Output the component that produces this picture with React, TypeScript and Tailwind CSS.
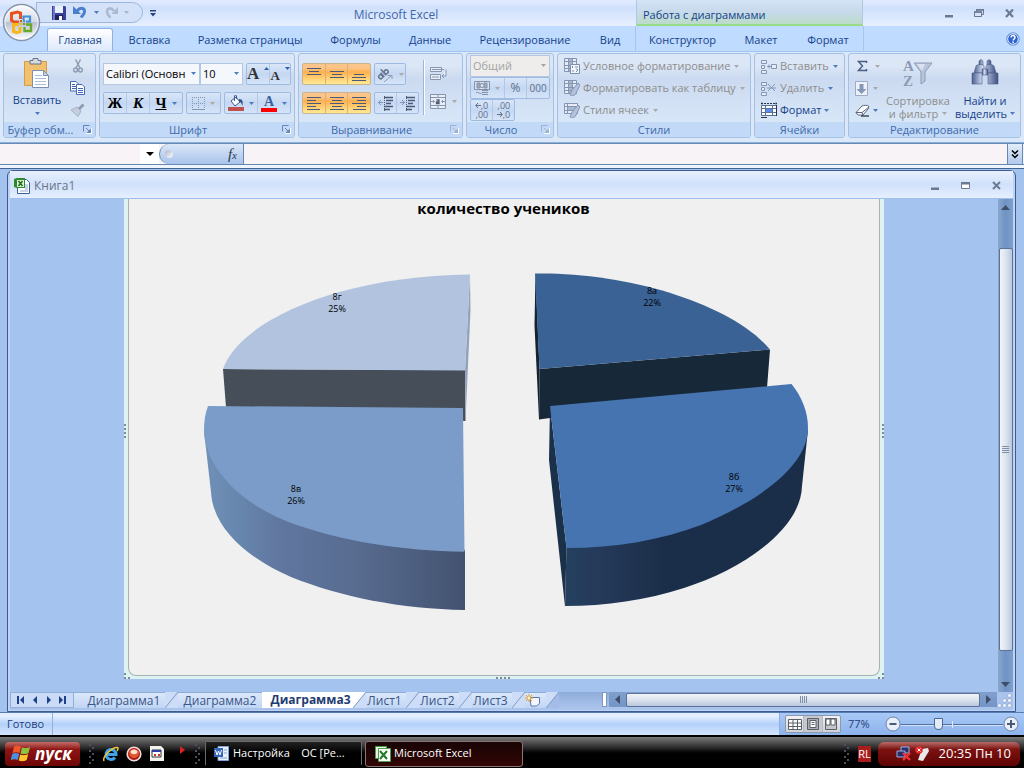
import type { ReactNode } from "react";
import clsx from "clsx";

interface BoxProps {
  className?: string;
  children?: ReactNode;
}

const Caret = ({ className = "text-[#4c7cc0]" }: { className?: string }) => (
  <svg width="5" height="3" viewBox="0 0 5 3" className={clsx("shrink-0", className)}>
    <path d="M0 0h5L2.500 3z" fill="currentColor" />
  </svg>
);

const Launcher = ({ dim }: { dim?: boolean }) => (
  <button aria-label="Параметры" className={dim ? "text-[#9fb0cc]" : "text-[#6886b5]"}>
    <svg width="9" height="9" viewBox="0 0 9 9" fill="none" stroke="currentColor">
      <path d="M.5 6.500V.5h6" />
      <path d="M3 3l4 4" />
      <path d="M8 3.500V8H3.500z" fill="currentColor" stroke="none" />
      <path d="M8.500 3v5.500H3" stroke="#fff" />
    </svg>
  </button>
);

/* ---------- title bar ---------- */

const OfficeButton = () => (
  <button aria-label="Office" className="absolute left-[2px] top-[3px] z-10">
    <svg width="39" height="39" viewBox="0 0 39 39">
      <defs>
        <linearGradient id="orb" x1="0" y1="0" x2="0" y2="1">
          <stop offset="0" stopColor="#fdfdfe" />
          <stop offset=".48" stopColor="#d5dbe6" />
          <stop offset=".5" stopColor="#b9c2d1" />
          <stop offset="1" stopColor="#fff" />
        </linearGradient>
      </defs>
      <circle cx="19.500" cy="19.500" r="18" fill="url(#orb)" stroke="#8795ac" strokeWidth="1.500" />
      <circle cx="19.500" cy="19.500" r="16.500" fill="none" stroke="#fff" opacity=".8" />
      <g fill="none" strokeWidth="3">
        <path d="M18.500 16V10l-3-1-6 1.500v7l3 1.500H17" stroke="#e8511c" />
        <path d="M21.500 17v-3.500H28v5h-4" stroke="#3f8fd6" strokeWidth="2.200" />
        <path d="M17 21.500h-5.500v7l3 1.200 3.500-1V24" stroke="#f6b61c" />
        <path d="M24 21.500h5v6.500h-6.500v-4" stroke="#6aa82c" strokeWidth="2.400" />
      </g>
      <g fill="#c9521f">
        <path d="M18 17h2v2h-2z" />
        <path d="M21 17h2v2h-2z" fill="#3f8fd6" />
        <path d="M18 20h2v2h-2z" fill="#f6b61c" />
        <path d="M21 20h2v2h-2z" fill="#6aa82c" />
      </g>
    </svg>
  </button>
);

const TitleBar = () => (
  <header className="relative flex h-[26px] bg-linear-to-b from-[#dfe9ff] from-10% via-[#cfe0fb] via-30% to-[#e6efff]">
    <OfficeButton />
    <div className="ml-9 flex items-center">
      <div className="mt-[2px] flex h-[21px] w-[107px] items-center gap-[6px] self-start rounded-r-full border border-[#9cb6dc] bg-[#d3e2f8] pl-[15px]">
        <button aria-label="Сохранить">
          <svg width="14" height="14" viewBox="0 0 14 14">
            <path d="M0 0h13l1 1v13H0z" fill="#3b3f9c" />
            <path d="M3 0h8v7H3z" fill="#e8f0fb" />
            <path d="M1 0h2v14H1z" fill="#7377c8" />
            <path d="M3 9h8v5H3z" fill="#20235e" />
            <path d="M7 10h3v4H7z" fill="#fff" />
          </svg>
        </button>
        <button aria-label="Отменить" className="ml-[1px] flex items-center gap-[7px]">
          <svg width="14" height="13" viewBox="0 0 14 13">
            <path d="M4 5C7 1 11.500 1.500 11.500 5.500c0 3-2 3.500-3.500 6" fill="none" stroke="#4a7fd0" strokeWidth="3" />
            <path d="M0 0v8h8z" fill="#4a7fd0" />
          </svg>
          <Caret />
        </button>
        <button aria-label="Вернуть" className="flex items-center gap-[6px]">
          <svg width="13" height="13" viewBox="0 0 13 13">
            <path d="M9 5C6 1 2 2 2 5.500c0 3 1.500 4 3.500 6" fill="none" stroke="#a9b9d2" strokeWidth="2.600" />
            <path d="M13 1v7H6.500z" fill="#a9b9d2" />
          </svg>
          <Caret className="text-[#a9b4c6]" />
        </button>
      </div>
      <button aria-label="Настройка панели" className="ml-[7px]">
        <svg width="6" height="7" viewBox="0 0 6 7" fill="#27467e">
          <path d="M0 0h6v1.500H0zM0 3h6L3 6.500z" />
        </svg>
      </button>
    </div>
    <h1 className="flex-1 pt-[6px] text-center text-[12px] leading-[18px] text-[#4067ab]">Microsoft Excel</h1>
    <div className="w-[227px] border-x border-[#b2c8de] border-b-2 border-b-[#97da87] bg-linear-to-b from-[#d5e3f7] via-[#c6d9ea] to-[#bcdcc8] pl-[6px] pt-[7px] text-[11px] leading-[16px] text-[#15428b]">
      Работа с диаграммами
    </div>
    <div className="flex w-[161px] items-center justify-end gap-[21px] pr-[10px] text-[#6b7a90]">
      <button aria-label="Свернуть">
        <svg width="8" height="10" viewBox="0 0 8 10"><path d="M0 7h8v2.500H0z" fill="currentColor" /></svg>
      </button>
      <button aria-label="Восстановить">
        <svg width="10" height="9" viewBox="0 0 10 9" fill="none" stroke="currentColor">
          <path d="M2.500 2V.5h7v5H8M.5 3h7v4.500h-7z" />
          <path d="M0 3h8M2 1h8" strokeWidth="1.500" />
        </svg>
      </button>
      <button aria-label="Закрыть">
        <svg width="9" height="9" viewBox="0 0 9 9"><path d="M1 .5l7 7.500M8 .5L1 8" stroke="currentColor" strokeWidth="2.200" /></svg>
      </button>
    </div>
  </header>
);

/* ---------- ribbon ---------- */

const tabs = [
  { name: "Вставка", width: "w-[69px]" },
  { name: "Разметка страницы", width: "w-[132px]" },
  { name: "Формулы", width: "w-[79px]" },
  { name: "Данные", width: "w-[70px]" },
  { name: "Рецензирование", width: "w-[120px]" },
  { name: "Вид", width: "w-[50px]" },
];

const chartTabs = [
  { name: "Конструктор", width: "w-[93px]" },
  { name: "Макет", width: "w-[64px]" },
  { name: "Формат", width: "w-[70px]" },
];

const TabBar = () => (
  <nav className="flex h-[25px] bg-[#bfdbff] pl-[47px] text-[11px] text-[#15428b]">
    <button className="mr-[2px] mt-[2px] w-[66px] rounded-t-[3px] border border-b-0 border-[#8fb2e2] bg-linear-to-b from-white to-[#dce9fb]">
      Главная
    </button>
    {tabs.map((t) => (
      <button key={t.name} className={clsx("pt-[4px]", t.width)}>
        {t.name}
      </button>
    ))}
    <div className="flex border-x border-[#a9c6e8]">
      {chartTabs.map((t) => (
        <button key={t.name} className={clsx("pt-[4px]", t.width)}>
          {t.name}
        </button>
      ))}
    </div>
    <button aria-label="Справка" className="ml-auto mr-[4px]">
      <svg width="14" height="14" viewBox="0 0 14 14">
        <circle cx="7" cy="7" r="6.300" fill="#2c62d2" stroke="#7ea2dc" />
        <circle cx="7" cy="7" r="5.300" fill="none" stroke="#e8f0ff" />
        <path d="M5 5.600c0-3 4.200-2.500 4 0C9 7 7.200 6.800 7.200 8.400M7.200 9.500v1.500" fill="none" stroke="#fff" strokeWidth="1.500" />
      </svg>
    </button>
  </nav>
);

interface GroupProps extends BoxProps {
  title: string;
  launcher?: "on" | "dim";
}

const Group = ({ title, launcher, className, children }: GroupProps) => (
  <section
    className={clsx(
      "flex h-[85px] flex-col overflow-hidden rounded-[3px] border border-[#a5c0e0] bg-linear-to-b from-[#dbe6f6] from-15% via-[#cbdaf0] via-30% to-[#dcebfa]",
      className,
    )}
  >
    <div className="flex h-[68px] shrink-0">{children}</div>
    <div className="flex flex-1 items-center bg-[#c2d9f7] px-[3px] text-[11px] leading-[14px] text-[#3e6aaa]">
      <h2 className={clsx("flex-1 whitespace-nowrap text-center", launcher && "pr-[9px]")}>{title}</h2>
      {launcher && <Launcher dim={launcher === "dim"} />}
    </div>
  </section>
);

const ButtonSet = ({ className, children }: BoxProps) => (
  <div
    className={clsx(
      "flex h-[22px] divide-x divide-[#b3c8e6] rounded-[2px] border border-[#9dbbe3] bg-linear-to-b from-[#d9e6f8] via-[#c5d8f2] to-[#d5e4f8]",
      className,
    )}
  >
    {children}
  </div>
);

interface ToolProps extends BoxProps {
  label: string;
  disabled?: boolean;
}

const Tool = ({ label, disabled, className, children }: ToolProps) => (
  <button
    aria-label={label}
    disabled={disabled}
    className={clsx("flex flex-1 items-center justify-center gap-[5px]", className)}
  >
    {children}
  </button>
);

const PasteIcon = () => (
  <svg width="28" height="31" viewBox="0 0 28 31">
    <path d="M1.500 3.500h22v24h-22z" fill="#f2c170" stroke="#d49b45" />
    <path d="M7 6V2.500h3V.5h5v2h3V6z" fill="#d6dbe3" stroke="#6b7482" />
    <path d="M9.500 12.500h11l5 5v12h-16z" fill="#fff" stroke="#7c8fae" />
    <path d="M20.500 12.500v5h5z" fill="#c7d5ea" stroke="#7c8fae" />
    <path d="M12 17.500h7M12 20.500h11M12 23.500h11M12 26.500h11" stroke="#a9bddb" />
  </svg>
);

const Clipboard = () => (
  <Group title="Буфер обм..." launcher="on" className="w-[93px]">
    <button className="flex w-[66px] flex-col items-center pt-[4px] text-[11px] text-[#15428b]">
      <PasteIcon />
      <span className="mb-[3px] mt-[2px] leading-[18px]">Вставить</span>
      <Caret />
    </button>
    <div className="flex flex-col items-center gap-[8px] pt-[5px]">
      <button aria-label="Вырезать">
        <svg width="10" height="14" viewBox="0 0 10 14" fill="none" stroke="#8e9cb4" strokeWidth="1.500">
          <path d="M2.500.5L7 9M7.500.5L3 9" />
          <circle cx="2.500" cy="11" r="1.900" />
          <circle cx="7.500" cy="11" r="1.900" />
        </svg>
      </button>
      <button aria-label="Копировать">
        <svg width="15" height="14" viewBox="0 0 15 14" fill="#fff" stroke="#4468b5">
          <path d="M.5.500H6l2.500 2.500v7h-8zM2 3.500h3M2 5.500h5M2 7.500h5" />
          <path d="M6.500 3.500H12l2.500 2.500v7.500h-8zM8 7.500h5M8 9.500h5M8 11.500h5" />
        </svg>
      </button>
      <button aria-label="Формат по образцу">
        <svg width="15" height="14" viewBox="0 0 15 14">
          <path d="M1 7l6-3 4 4-3 5.500z" fill="#c5cedd" stroke="#a4b0c4" />
          <path d="M8 5l4.500-4.500 2 2L10 7z" fill="#8d9bb2" />
        </svg>
      </button>
    </div>
  </Group>
);

interface ComboProps {
  label: string;
  value: string;
  className?: string;
  disabled?: boolean;
}

const Combo = ({ label, value, className, disabled }: ComboProps) => (
  <div className={clsx("relative", className)}>
    <select
      aria-label={label}
      disabled={disabled}
      className={clsx(
        "block size-full appearance-none border border-[#b3c7e1] pl-[2px] text-[11px] opacity-100",
        disabled ? "bg-[#eeedec] text-[#a3a3a3]" : "bg-[#f4f7fc] text-black",
      )}
    >
      <option>{value}</option>
    </select>
    <span className="pointer-events-none absolute right-[4px] top-[9px]">
      <Caret className={disabled ? "text-[#a3a3a3]" : undefined} />
    </span>
  </div>
);

const FontGroup = () => (
  <Group title="Шрифт" launcher="on" className="w-[196px]">
    <div className="flex flex-1 flex-col gap-[7px] px-[3px] pt-[9px]">
      <div className="flex">
        <Combo label="Шрифт" value="Calibri (Основн" className="h-[22px] w-[97px]" />
        <Combo label="Размер" value="10" className="h-[22px] w-[43px]" />
        <ButtonSet className="ml-[3px] flex-1 font-['Liberation_Serif',serif] font-bold text-[#333]">
          <Tool label="Увеличить размер" className="gap-0">
            <span className="text-[17px] leading-[20px]">A</span>
            <svg width="5" height="14" viewBox="0 0 5 14"><path d="M0 3h5L2.500 0z" fill="#2d5fa8" /></svg>
          </Tool>
          <Tool label="Уменьшить размер" className="gap-0">
            <span className="pt-[3px] text-[13px] leading-[16px]">A</span>
            <svg width="5" height="14" viewBox="0 0 5 14"><path d="M0 0h5L2.500 3z" fill="#2d5fa8" /></svg>
          </Tool>
        </ButtonSet>
      </div>
      <div className="flex gap-[3px]">
        <ButtonSet className="w-[80px] font-['Liberation_Serif',serif] text-[15px] font-bold text-black">
          <Tool label="Полужирный">Ж</Tool>
          <Tool label="Курсив" className="italic">К</Tool>
          <Tool label="Подчеркнутый" className="basis-[10px]">
            <span className="underline">Ч</span>
            <Caret />
          </Tool>
        </ButtonSet>
        <ButtonSet className="w-[35px]">
          <Tool label="Границы" disabled>
            <svg width="13" height="13" viewBox="0 0 13 13" stroke="#8497b5" strokeDasharray="1 1">
              <path d="M0 .5h13M0 6.500h13M.5 0v13M6.500 0v13M12.500 0v13" />
              <path d="M0 12.500h13" strokeDasharray="none" />
            </svg>
            <Caret className="text-[#b0a898]" />
          </Tool>
        </ButtonSet>
        <ButtonSet className="flex-1">
          <Tool label="Цвет заливки">
            <svg width="16" height="16" viewBox="0 0 16 16">
              <path d="M3 6l5-4 4 5-5 4z" fill="#f5f8fd" stroke="#41598a" />
              <path d="M6.500 6V1c0-1 2-1 2 0v3" fill="none" stroke="#41598a" />
              <path d="M11 4c4 0 4 3 3.500 7-1-2-1-4-3.500-4z" fill="#31508e" />
              <path d="M0 12h16v4H0z" fill="#c0504d" />
            </svg>
            <Caret />
          </Tool>
          <Tool label="Цвет текста">
            <span className="w-[16px] border-b-4 border-[#f00] text-center font-['Liberation_Serif',serif] text-[14px] font-bold leading-[13px] text-[#3a5f9e]">
              A
            </span>
            <Caret />
          </Tool>
        </ButtonSet>
      </div>
    </div>
  </Group>
);

const lineIcons = [
  [
    { label: "По верхнему краю", d: "M0 1.500h14M2 4.500h10M0 7.500h14" },
    { label: "По середине", d: "M0 4.500h14M2 7.500h10M0 10.500h14" },
    { label: "По нижнему краю", d: "M2 7.500h10M0 10.500h14M0 13.500h14" },
  ],
  [
    { label: "По левому краю", d: "M0 1.500h14M0 4.500h9M0 7.500h14M0 10.500h9M0 13.500h13" },
    { label: "По центру", d: "M0 1.500h14M2 4.500h10M0 7.500h14M2 10.500h10M0 13.500h14" },
    { label: "По правому краю", d: "M0 1.500h14M5 4.500h9M0 7.500h14M5 10.500h9M1 13.500h13" },
  ],
];

const AlignSet = ({ row }: { row: number }) => (
  <div className="flex h-[22px] w-[69px] divide-x divide-[#d3b27c] rounded-[2px] border border-[#c5b592] bg-linear-to-b from-[#fbc488] from-20% via-[#fdb04e] via-40% to-[#ffea92]">
    {lineIcons[row].map((i) => (
      <Tool key={i.label} label={i.label}>
        <svg width="14" height="15" viewBox="0 0 14 15" stroke="#4b5a78" strokeWidth="1.200">
          <path d={i.d} />
        </svg>
      </Tool>
    ))}
  </div>
);

const AlignGroup = () => (
  <Group title="Выравнивание" launcher="dim" className="w-[165px]">
    <div className="mr-[4px] flex flex-col gap-[7px] pl-[3px] pt-[9px]">
      <div className="flex gap-[3px]">
        <AlignSet row={0} />
        <ButtonSet className="w-[32px]">
          <Tool label="Ориентация" disabled className="gap-[2px]">
            <svg width="17" height="17" viewBox="0 0 17 17" fill="none" stroke="#66758f">
              <g transform="rotate(-42 6 8)" strokeWidth="1.500">
                <circle cx="2.500" cy="8.500" r="2" />
                <path d="M5 5.500V11M7.500 3v8" />
                <circle cx="9.800" cy="8.500" r="2" />
              </g>
              <path d="M7 16l7-6M10.500 9.500H15V13" stroke="#8d9ab0" />
            </svg>
            <Caret className="text-[#a9a9a9]" />
          </Tool>
        </ButtonSet>
      </div>
      <div className="flex gap-[3px]">
        <AlignSet row={1} />
        <ButtonSet className="w-[45px]">
          <Tool label="Уменьшить отступ">
            <svg width="16" height="15" viewBox="0 0 16 15" stroke="#4b5a78">
              <path d="M6 1.500h9M8 4.500h7M8 7.500h5M6 10.500h9M6 13.500h6" strokeWidth="1.400" />
              <path d="M6.500 0v15" strokeDasharray="1 1" />
              <path d="M0 6.500h5M3 4L.5 6.500 3 9" fill="none" stroke="#8796b0" />
            </svg>
          </Tool>
          <Tool label="Увеличить отступ">
            <svg width="16" height="15" viewBox="0 0 16 15" stroke="#4b5a78">
              <path d="M6 1.500h9M8 4.500h7M8 7.500h5M6 10.500h9M6 13.500h6" strokeWidth="1.400" />
              <path d="M6.500 0v15" strokeDasharray="1 1" />
              <path d="M0 6.500h5M2 4l2.500 2.500L2 9" fill="none" stroke="#8796b0" />
            </svg>
          </Tool>
        </ButtonSet>
      </div>
    </div>
    <div className="mt-[6px] flex h-[55px] flex-col justify-between border-l border-[#9fb5d4] py-[6px] pl-[6px] shadow-[inset_1px_0_#fff]">
      <button aria-label="Перенос текста" disabled>
        <svg width="17" height="15" viewBox="0 0 17 15" fill="#e9edf5" stroke="#8796b0">
          <path d="M.5 1.500h11v4H.5zM.5 8.500h10v5H.5zM2 3.500h12M2 11h7M16 3.500V10h-4M14 8l-2 2 2 2" />
        </svg>
      </button>
      <button aria-label="Объединить" disabled className="flex items-center gap-[6px]">
        <svg width="16" height="15" viewBox="0 0 16 15" fill="#e9edf5" stroke="#8796b0">
          <path d="M.5.500h15v14H.5zM8 0v4M8 11v4M0 3.500h16M0 11.500h16M1 7.500h3M12 7.500h3M3 6l1.500 1.500L3 9M13 6l-1.500 1.500L13 9" />
          <path d="M6.500 6h2.500v3.500H6.500V8H9" fill="none" stroke="#4f5d78" strokeWidth="1.300" />
        </svg>
        <Caret className="text-[#a9a9a9]" />
      </button>
    </div>
  </Group>
);

const NumberGroup = () => (
  <Group title="Число" launcher="dim" className="w-[88px]">
    <div className="flex flex-1 flex-col px-[3px] pt-[1px]">
      <Combo label="Числовой формат" value="Общий" disabled className="h-[22px]" />
      <ButtonSet className="text-[12px] text-[#5e6f8c]">
        <Tool label="Денежный формат" disabled className="basis-[12px]">
          <svg width="16" height="16" viewBox="0 0 16 16" fill="#dbe2ed" stroke="#8493ab">
            <path d="M.5 1.500h15v8H.5z" />
            <path d="M3 3h3v5H3zM10 3h3v5h-3z" fill="#9eabc0" />
            <circle cx="8" cy="5.500" r="2" />
            <path d="M8 10.500h6M8 12.500h6M8 14.500h6M2 13c2-2 4 2 6 0" />
          </svg>
          <Caret className="text-[#a9a9a9]" />
        </Tool>
        <Tool label="Процентный формат" disabled>%</Tool>
        <Tool label="Формат с разделителями" disabled>
          <span className="text-[10px]">000</span>
        </Tool>
      </ButtonSet>
      <ButtonSet className="w-[45px] text-[9px] leading-[9px] text-[#5e6f8c]">
        <Tool label="Увеличить разрядность" disabled>
          <span className="flex flex-col items-end">
            <span className="flex items-center">
              <svg width="6" height="5" viewBox="0 0 6 5" fill="none" stroke="currentColor"><path d="M6 2.500H1M3 0L.7 2.500 3 5" /></svg>
              ,0
            </span>
            ,00
          </span>
        </Tool>
        <Tool label="Уменьшить разрядность" disabled>
          <span className="flex flex-col items-end">
            ,00
            <span className="flex items-center">
              <svg width="6" height="5" viewBox="0 0 6 5" fill="none" stroke="currentColor"><path d="M0 2.500h5M3 0l2.300 2.500L3 5" /></svg>
              ,0
            </span>
          </span>
        </Tool>
      </ButtonSet>
    </div>
  </Group>
);

const GridIcon = ({ overlay }: { overlay: ReactNode }) => (
  <svg width="16" height="16" viewBox="0 0 16 16" className="shrink-0">
    <path d="M.5.500h12v13H.5z" fill="#e6ebf4" />
    <path d="M4 1h4v12H4z" fill="#a9b8d0" />
    <path d="M.5.500h12v13H.5zM0 3.500h13M0 7.500h13M0 10.500h13M4.500 0v14M8.500 0v14" fill="none" stroke="#8496b5" />
    {overlay}
  </svg>
);

const brush = <path d="M6 15l2-5 6-7 2 2-4 8c-1 3-4 3-6 2z" fill="#b4c1d8" stroke="#8496b5" />;

const styleItems = [
  {
    text: "Условное форматирование",
    icon: (
      <GridIcon
        overlay={<path d="M6.500 6.500h9v9h-9zM9 8l-1 1 1 1M11 9h3M8 13h2M12 11l2 1-2 2" fill="#f1f4f9" stroke="#7d8fae" />}
      />
    ),
  },
  { text: "Форматировать как таблицу", icon: <GridIcon overlay={brush} /> },
  {
    text: "Стили ячеек",
    icon: (
      <svg width="16" height="16" viewBox="0 0 16 16" className="shrink-0">
        <path d="M.5 1.500h13v10H.5zM0 4.500h14M0 8.500h14M3.500 1v11" fill="#e6ebf4" stroke="#8496b5" />
        <path d="M4 5h9v3H4z" fill="#a9b8d0" />
        {brush}
      </svg>
    ),
  },
];

const StylesGroup = () => (
  <Group title="Стили" className="w-[194px]">
    <div className="flex flex-col pl-[6px] pt-[1px]">
      {styleItems.map((s) => (
        <button key={s.text} disabled className="flex h-[22px] items-center gap-[3px] whitespace-nowrap text-[11px] text-[#8d8d8d]">
          {s.icon}
          {s.text}
          <Caret className="ml-[1px] text-[#a9a9a9]" />
        </button>
      ))}
    </div>
  </Group>
);

const cellItems = [
  { text: "Вставить", mark: "M6 7.500h4M8 5.500v4M10.500 5.500h5v4h-5z" },
  { text: "Удалить", mark: "M7 3l7 7M14 3l-7 7M6 7h9" },
];

const CellsGroup = () => (
  <Group title="Ячейки" className="w-[91px]">
    <div className="flex flex-col pl-[6px] pt-[1px] text-[11px]">
      {cellItems.map((c) => (
        <button key={c.text} disabled className="flex h-[22px] items-center gap-[3px] text-[#8d8d8d]">
          <svg width="16" height="15" viewBox="0 0 16 15" fill="#e6ebf4" stroke="#8496b5">
            <path d="M.5 1.500h5v3h-5zM.5 6.500h3v3h-3zM.5 11.500h5v3h-5z" />
            <path d={c.mark} />
          </svg>
          {c.text}
          <Caret className="ml-[1px] text-[#4c7cc0]" />
        </button>
      ))}
      <button className="flex h-[22px] items-center gap-[3px] text-[#15428b]">
        <svg width="16" height="16" viewBox="0 0 16 16">
          <path d="M.5 3.500h15v10H.5z" fill="#fff" />
          <path d="M5 6h6v5H5z" fill="#5c8cf0" />
          <path d="M1 .5v2M15 .5v2M0 1.500h16" stroke="#27324d" strokeDasharray="2 1" />
          <path d="M.5 3.500h15v10H.5zM0 6.500h16M0 10.500h16M4.500 3v11M11.500 3v11" fill="none" stroke="#5b6f99" />
          <path d="M0 15.500h6M15.500 3v11" stroke="#27324d" />
        </svg>
        Формат
        <Caret className="text-[#4c7cc0]" />
      </button>
    </div>
  </Group>
);

const EditGroup = () => (
  <Group title="Редактирование" className="flex-1">
    <div className="flex w-[34px] flex-col pl-[6px] pt-[1px]">
      <button aria-label="Сумма" className="flex h-[22px] items-center gap-[5px]">
        <svg width="13" height="12" viewBox="0 0 13 12" className="mx-[1px]">
          <path d="M10.500 3V1.500H2.500L6.500 6l-4 4.500h8V9" fill="none" stroke="#4a5f86" strokeWidth="1.500" />
        </svg>
        <Caret className="text-[#a9a9a9]" />
      </button>
      <button aria-label="Заполнить" disabled className="flex h-[22px] items-center gap-[4px]">
        <svg width="14" height="15" viewBox="0 0 14 15">
          <path d="M.5.500h12v14H.5z" fill="#eef2f8" stroke="#9aabc6" />
          <path d="M4.500 3h4v5h3l-5 5-5-5h3z" fill="#8597b5" />
        </svg>
        <Caret className="text-[#a9a9a9]" />
      </button>
      <button aria-label="Очистить" className="flex h-[22px] items-center gap-[2px]">
        <svg width="16" height="13" viewBox="0 0 16 13">
          <path d="M1 8.500L7 2c1-1 6-1 7 .5L13 5l-5 6H3z" fill="#fff" stroke="#5a6780" />
          <path d="M1 8.500h6L14 3M7 8.500L8 11" fill="none" stroke="#5a6780" />
          <path d="M6 12h8" stroke="#000" />
        </svg>
        <Caret />
      </button>
    </div>
    <button disabled className="flex w-[70px] flex-col items-center pt-[4px] text-[11px] leading-[13px] text-[#8d8d8d]">
      <svg width="30" height="30" viewBox="0 0 30 30" className="mb-[6px]">
        <text x="0" y="13" fontSize="15" fontFamily="Liberation Serif" fontWeight="bold" fill="#8c9bb5">A</text>
        <text x="0" y="28" fontSize="15" fontFamily="Liberation Serif" fontWeight="bold" fill="#8c9bb5">Z</text>
        <path d="M11 5h18l-7 9v9l-4 3V14z" fill="#b8c5da" stroke="#8c9bb5" />
        <path d="M14 6h8l-3 7z" fill="#dbe3ef" />
      </svg>
      Сортировка
      <span className="flex items-center gap-[4px] whitespace-nowrap">
        и фильтр <Caret className="text-[#a9a9a9]" />
      </span>
    </button>
    <button className="flex flex-1 flex-col items-center pr-[3px] pt-[4px] text-[11px] leading-[13px] text-[#15428b]">
      <svg width="28" height="30" viewBox="0 0 28 30" className="mb-[6px]">
        <defs>
          <linearGradient id="lens" x1="0" x2="1">
            <stop offset="0" stopColor="#4a5f8c" />
            <stop offset=".4" stopColor="#d3dff5" />
            <stop offset="1" stopColor="#3d5180" />
          </linearGradient>
        </defs>
        <g fill="url(#lens)" stroke="#4a5c86" strokeWidth=".6">
          <path d="M8 4c0-3 4-3 4 0v3H8zM16 4c0-3 4-3 4 0v3h-4z" />
          <path d="M5 8c1-2 7-2 8 0v7H3zM15 8c1-2 7-2 8 0l2 7H15z" />
          <path d="M11 11h6v6h-6z" />
          <path d="M1 15h10v11H1zM17 15h10v11H17z" />
        </g>
      </svg>
      Найти и
      <span className="flex items-center gap-[3px]">
        выделить <Caret />
      </span>
    </button>
  </Group>
);

const Ribbon = () => (
  <div className="flex gap-[3px] border-y border-t-[#a3c4f0] border-b-[#8db0d6] bg-[#dbe8fa] px-[3px] pb-[4px] pt-[1px]">
    <Clipboard />
    <FontGroup />
    <AlignGroup />
    <NumberGroup />
    <StylesGroup />
    <CellsGroup />
    <EditGroup />
  </div>
);

const FormulaBar = () => (
  <div className="border-b border-[#3f6590] bg-[#eef5ff] pb-[3px]">
    <div className="flex h-[22px] border-y border-[#6589b4] bg-[#f7f3f7] pl-[1px]">
      <input aria-label="Имя" className="w-[139px] bg-[#f7f3f7] px-[2px] text-[11px] outline-none" />
      <button aria-label="Список имён" className="flex w-[19px] items-center justify-center bg-white">
        <svg width="8" height="4" viewBox="0 0 8 4"><path d="M0 0h8L4 4z" /></svg>
      </button>
      <div className="flex w-[85px] items-center justify-between rounded-l-full border border-y-0 border-[#6589b4] bg-linear-to-b from-[#dbe7f8] to-[#a9c3ea] pl-[5px] pr-[6px]">
        <span className="size-[8px] rounded-full bg-linear-to-br from-[#a9b6c9] to-white" />
        <button aria-label="Вставить функцию" className="font-['Liberation_Serif',serif] text-[15px] italic leading-[18px] text-[#2b3850]">
          f<span className="text-[11px]">x</span>
        </button>
      </div>
      <input aria-label="Строка формул" className="min-w-0 flex-1 bg-[#f7f3f7] px-[2px] text-[11px] outline-none" />
      <button aria-label="Развернуть" className="mr-[1px] flex w-[16px] items-center justify-center border-x border-[#6589b4] bg-linear-to-b from-[#e3edfb] to-[#b0c8ec]">
        <svg width="8" height="9" viewBox="0 0 8 9" fill="none" stroke="#000" strokeWidth="1.500">
          <path d="M1 .5l3 3 3-3M1 4.500l3 3 3-3" />
        </svg>
      </button>
    </div>
  </div>
);

/* ---------- workbook ---------- */

const labels = [
  { x: 336, y: 300, name: "8г", value: "25%" },
  { x: 651, y: 294, name: "8а", value: "22%" },
  { x: 733, y: 480, name: "8б", value: "27%" },
  { x: 295, y: 492, name: "8в", value: "26%" },
];

const PieChart = () => (
  <svg width="750" height="476" viewBox="128 199 750 476" className="block">
    <defs>
      <linearGradient id="sideB" x1="0" x2="1">
        <stop offset="0" stopColor="#24415f" />
        <stop offset=".12" stopColor="#263a5b" />
        <stop offset=".4" stopColor="#1b2e49" />
        <stop offset="1" stopColor="#1b2e49" />
      </linearGradient>
      <linearGradient id="sideV" x1="0" x2="1">
        <stop offset="0" stopColor="#7090b8" />
        <stop offset=".15" stopColor="#6685ac" />
        <stop offset=".3" stopColor="#60769f" />
        <stop offset=".6" stopColor="#576b8f" />
        <stop offset="1" stopColor="#43526f" />
      </linearGradient>
    </defs>
    <text x="502.500" y="214" textAnchor="middle" fontSize="15" fontWeight="bold">
      количество учеников
    </text>
    {/* 8г */}
    <path d="M222 369l242 1 .5 51L226 420z" fill="#464f59" />
    <path d="M469 274.500l.5 36-5 110-.5-50z" fill="#93a3bb" />
    <path d="M222 369C238 322 335 276 469 274.500L464 370.500z" fill="#b1c3de" />
    {/* 8а */}
    <path d="M534.500 273.500l4 95.500-.5 50.500-4.500-94z" fill="#14232f" />
    <path d="M538.500 369L769 349.500l-3 38.500L549 418l-11 1.500z" fill="#172839" />
    <path d="M534 273.500C625 272 730 303 769 349.500L538.500 369z" fill="#3a6295" />
    {/* 8в */}
    <path d="M203 431l7 61c2 38 40 68 80 85 50 20 110 32 174 33v-60L290 500z" fill="url(#sideV)" />
    <path d="M207 406l255 2 1.500 143.700C400 551 340 541 290 523 230 500 203 460 203 430c0-8 1-16 4-24z" fill="#7b9cc8" />
    {/* 8б */}
    <path d="M549 406l16.500 142L564 606l-16-146z" fill="#1b3049" />
    <path d="M807 430l-6 56c-1 44-61 84-118 102-38 12-78 18-119 18l1.500-60L700 500z" fill="url(#sideB)" />
    <path d="M549 406l241.500-22c10.500 13 16.500 28 16.500 44 0 37-47 72-107 97-40 15-85 23-134.500 23z" fill="#4574b0" />
    <g fontSize="9" textAnchor="middle">
      {labels.map((l) => (
        <text key={l.name} x={l.x} y={l.y}>
          {l.name}
          <tspan x={l.x} dy="12">
            {l.value}
          </tspan>
        </text>
      ))}
    </g>
  </svg>
);

const Handle = ({ className }: BoxProps) => (
  <span className={clsx("absolute border-dotted border-[#7f8b96]", className)} />
);

const ChartSheet = () => (
  <div className="flex flex-1 items-start justify-center">
    <div className="relative bg-[#dff2f2] px-[4px] pb-[3px]">
      <div className="overflow-hidden rounded-b-[8px] border-x border-b border-[#a9b3b3] bg-[#f0f0f0]">
        <PieChart />
      </div>
      <Handle className="left-0 top-[225px] h-[14px] border-l-2" />
      <Handle className="right-0 top-[225px] h-[14px] border-l-2" />
      <Handle className="bottom-0 left-[372px] w-[14px] border-t-2" />
      <Handle className="bottom-0 left-0 h-[6px] w-[6px] border-b-2 border-l-2" />
      <Handle className="bottom-0 right-0 h-[6px] w-[6px] border-b-2 border-r-2" />
    </div>
  </div>
);

const VScroll = () => (
  <div className="flex w-[16px] flex-col items-center border-l border-[#a9c4e8] bg-linear-to-r from-[#8aa7cf] via-[#6f93c4] to-[#7f9fca] text-[#3f4d69]">
    <button aria-label="Вверх" className="flex h-[49px] items-start pt-[6px]">
      <svg width="9" height="5" viewBox="0 0 9 5"><path d="M0 5h9L4.500 0z" fill="currentColor" /></svg>
    </button>
    <div className="flex w-[14px] flex-1 flex-col items-center justify-center rounded-[2px] border border-[#5c7396] bg-linear-to-r from-[#f2f5fa] via-[#dbe3ee] to-[#b9c8dd]">
      <span className="h-[7px] w-[7px] bg-[repeating-linear-gradient(#8090a8_0_1px,transparent_1px_2px)]" />
    </div>
    <button aria-label="Вниз" className="flex h-[41px] items-end pb-[5px]">
      <svg width="9" height="5" viewBox="0 0 9 5"><path d="M0 0h9L4.500 5z" fill="currentColor" /></svg>
    </button>
  </div>
);

const Slash = ({ left, right }: { left: string; right: string }) => (
  <svg width="13" height="16" viewBox="0 0 13 16" className="shrink-0">
    <path d="M0 0h13L0 16z" fill={left} />
    <path d="M13 0v16H0z" fill={right} />
    <path d="M0 16L13 0" stroke="#7f9cc6" />
  </svg>
);

const sheetClass = "h-[16px] whitespace-nowrap border-t border-[#8eabd6] bg-linear-to-b from-[#dce8fb] to-[#c0d5f5] leading-[15px]";

const navIcons = [
  { label: "Первый лист", d: "M0 0h2v8H0zM7 0v8L3 4z" },
  { label: "Предыдущий лист", d: "M6 0v8L2 4z" },
  { label: "Следующий лист", d: "M2 0v8l4-4z" },
  { label: "Последний лист", d: "M0 0v8l4-4zM5 0h2v8H5z" },
];

const SheetTabs = () => (
  <div className="flex h-[18px] shrink-0 items-start bg-[#a9c3ec] text-[12px] text-[#3a5685]">
    <div className="flex h-[16px] w-[64px] shrink-0 items-center justify-around border border-[#93afd9] bg-[#c9dbf6] px-[3px] text-[#1d3f8c]">
      {navIcons.map((n) => (
        <button key={n.label} aria-label={n.label}>
          <svg width="8" height="8" viewBox="0 0 8 8" fill="currentColor"><path d={n.d} /></svg>
        </button>
      ))}
    </div>
    <button className={clsx(sheetClass, "w-[91px] pl-[9px]")}>Диаграмма1</button>
    <Slash left="#cdddf8" right="#cdddf8" />
    <button className={clsx(sheetClass, "w-[84px]")}>Диаграмма2</button>
    <button className="h-[16px] w-[91px] whitespace-nowrap bg-white pl-[6px] font-bold leading-[16px] text-[#1f3d73]">Диаграмма3</button>
    <Slash left="#fff" right="#cdddf8" />
    <button className={clsx(sheetClass, "w-[40px] pr-[3px]")}>Лист1</button>
    <Slash left="#cdddf8" right="#cdddf8" />
    <button className={clsx(sheetClass, "w-[40px] pr-[3px]")}>Лист2</button>
    <Slash left="#cdddf8" right="#cdddf8" />
    <button className={clsx(sheetClass, "w-[40px] pr-[3px]")}>Лист3</button>
    <Slash left="#cdddf8" right="#cdddf8" />
    <button aria-label="Вставить лист" className={clsx(sheetClass, "flex w-[21px] items-center")}>
      <svg width="16" height="13" viewBox="0 0 16 13">
        <path d="M5 3.500h9.500v6l-3 2.500H6z" fill="#f4f7fd" stroke="#5b76ab" />
        <path d="M4 0v8M0 4h8M1 1l6 6M7 1L1 7" stroke="#e39a2f" />
        <circle cx="4" cy="4" r="1.300" fill="#fff4b0" />
      </svg>
    </button>
    <Slash left="#cdddf8" right="#a3bde6" />
    <div className="flex h-[18px] flex-1 justify-end bg-linear-to-b from-[#8fadd9] to-[#adc6ee] pr-[2px]">
      <span className="flex h-[15px] w-[5px] justify-center border border-[#7d97c0] bg-white" />
    </div>
    <div className="flex h-[15px] w-[388px] items-center justify-between bg-linear-to-b from-[#7f9fcd] to-[#7595c6] text-[#3f4d69]">
      <button aria-label="Влево" className="w-[17px] pl-[6px]">
        <svg width="5" height="9" viewBox="0 0 5 9"><path d="M5 0v9L0 4.500z" fill="currentColor" /></svg>
      </button>
      <div className="flex h-[14px] flex-1 items-center justify-center rounded-[2px] border border-[#5c7396] bg-linear-to-b from-[#f2f5fa] via-[#dbe3ee] to-[#b9c8dd]">
        <span className="h-[7px] w-[7px] bg-[repeating-linear-gradient(90deg,#8090a8_0_1px,transparent_1px_2px)]" />
      </div>
      <button aria-label="Вправо" className="w-[17px] pl-[6px]">
        <svg width="5" height="9" viewBox="0 0 5 9"><path d="M0 0v9l5-4.500z" fill="currentColor" /></svg>
      </button>
    </div>
    <svg width="16" height="16" viewBox="0 0 16 16" fill="#fff" stroke="#7d97c0" strokeWidth=".4">
      <path d="M11 2h3v3h-3zM11 7h3v3h-3zM11 12h3v3h-3zM6 7h3v3H6zM6 12h3v3H6zM1 12h3v3H1z" />
    </svg>
  </div>
);

const Workbook = () => (
  <main className="flex flex-1 flex-col bg-[#a3c2ee] pl-[7px] pr-[8px] pt-[1px]">
    <div className="flex flex-1 flex-col rounded-t-[6px] border border-[#3d5b8f] bg-[#bcd3f5] px-[2px] pb-[1px]">
      <div className="flex h-[28px] items-center border-b border-[#9dbfeb] bg-linear-to-b from-[#e8f0ff] via-[#d0e1fb] to-[#e6efff] pl-[4px] pt-[2px] text-[#6b7a90]">
        <svg width="16" height="16" viewBox="0 0 16 16">
          <path d="M5.500 1.500h7l3 3v11h-12v-6" fill="#fff" stroke="#3e5f9e" />
          <path d="M11 7h3M11 9h3M11 11h3M6 13h8" stroke="#8fa8d4" />
          <path d="M0 1l3-1h8v10H3L0 9z" fill="#2f8a2c" />
          <path d="M3 2h7v7H3z" fill="#dff0d8" />
          <path d="M4.500 3l4 5M8.500 3l-4 5" stroke="#1d7320" strokeWidth="1.600" />
        </svg>
        <h2 className="ml-[4px] flex-1 text-[12px] text-[#6c7688]">Книга1</h2>
        <div className="flex items-center gap-[22px] pr-[12px]">
          <button aria-label="Свернуть книгу">
            <svg width="8" height="9" viewBox="0 0 8 9"><path d="M0 6.500h8V9H0z" fill="currentColor" /></svg>
          </button>
          <button aria-label="Развернуть книгу">
            <svg width="9" height="7" viewBox="0 0 9 7"><path d="M.5 2V6.500h8V2" fill="#fff" stroke="currentColor" /><path d="M0 0h9v2.500H0z" fill="currentColor" /></svg>
          </button>
          <button aria-label="Закрыть книгу">
            <svg width="9" height="9" viewBox="0 0 9 9"><path d="M1 1l7 7M8 1L1 8" stroke="currentColor" strokeWidth="2" /></svg>
          </button>
        </div>
      </div>
      <div className="flex flex-1 bg-[#a4c3ee]">
        <ChartSheet />
        <VScroll />
      </div>
      <SheetTabs />
    </div>
  </main>
);

/* ---------- status bar ---------- */

const ZoomButton = ({ label, d }: { label: string; d: string }) => (
  <button aria-label={label}>
    <svg width="16" height="16" viewBox="0 0 16 16">
      <circle cx="8" cy="8" r="7" fill="#e8eff9" stroke="#6f84a8" />
      <path d={d} stroke="#4c5b78" strokeWidth="2" />
    </svg>
  </button>
);

const StatusBar = () => (
  <footer className="flex h-[23px] shrink-0 border-t border-[#567db1] bg-linear-to-b from-[#e3eeff] from-15% via-[#b4d1fb] via-50% to-[#d5e5fc] text-[11px] text-[#1f3d78]">
    <div className="flex w-[53px] items-center border-r border-[#8fb0de] pl-[7px]">Готово</div>
    <div className="flex-1 border-r border-[#8fb0de]" />
    <div className="flex w-[244px] items-center bg-linear-to-b from-[#a9c9f6] to-[#8db3ec] pl-[5px]">
      <div className="flex h-[18px] w-[56px] divide-x divide-[#b3b9c2] rounded-[2px] border border-[#8b99ae] bg-linear-to-b from-[#f3f3f3] to-[#cfd2d6]">
        <Tool label="Обычный">
          <svg width="14" height="11" viewBox="0 0 14 11" fill="#fff" stroke="#5c5f66"><path d="M.5.500h13v10H.5zM0 4h14M0 7.500h14M5 0v11M9.500 0v11" /></svg>
        </Tool>
        <Tool label="Разметка страницы" className="bg-[#c6c9cf]">
          <svg width="12" height="12" viewBox="0 0 12 12" stroke="#5c5f66"><path d="M.5.500h11v11H.5z" fill="#a9adb5" /><path d="M3 2.500h6v7H3zM4.500 4.500h3M4.500 6.500h3" fill="#fff" /></svg>
        </Tool>
        <Tool label="Страничный">
          <svg width="12" height="12" viewBox="0 0 12 12" stroke="#5c5f66"><path d="M.5.500h11v11H.5z" fill="#c3c6cc" /><path d="M1 1h4v6H1zM6 1h4v6H6z" fill="#fff" /></svg>
        </Tool>
      </div>
      <button className="ml-[7px] w-[37px] text-left">77%</button>
      <ZoomButton label="Уменьшить" d="M4.500 8h7" />
      <div className="relative flex h-[16px] flex-1 items-center">
        <span className="absolute left-1/2 top-[5px] h-[7px] w-px bg-[#dce8fb]" />
        <input
          type="range"
          aria-label="Масштаб"
          defaultValue={36}
          className="h-px w-full appearance-none bg-[#4f6fa3] shadow-[0_1px_#d5e4fa] [&::-webkit-slider-thumb]:h-[12px] [&::-webkit-slider-thumb]:w-[9px] [&::-webkit-slider-thumb]:appearance-none [&::-webkit-slider-thumb]:rounded-b-[4px] [&::-webkit-slider-thumb]:border [&::-webkit-slider-thumb]:border-[#4a6797] [&::-webkit-slider-thumb]:bg-[#e3ebf7]"
        />
      </div>
      <div className="mr-[5px] flex">
        <ZoomButton label="Увеличить" d="M4 8h8M8 4v8" />
      </div>
    </div>
  </footer>
);

/* ---------- taskbar ---------- */

const Grip = () => (
  <svg width="6" height="20" viewBox="0 0 6 20" fill="#4a5260" className="shrink-0">
    <path d="M0 0h2v2H0zM3 3h2v2H3zM0 6h2v2H0zM3 9h2v2H3zM0 12h2v2H0zM3 15h2v2H3zM0 18h2v2H0z" />
  </svg>
);

const Taskbar = () => (
  <div className="flex h-[33px] shrink-0 items-center border-t-2 border-black bg-linear-to-b from-[#7b7b7b] via-[#2a2a2a] via-35% to-black to-60% pl-[5px] pr-[4px] pt-[2px] text-[11px] text-white">
    <button className="flex h-[24px] w-[75px] items-center gap-[5px] rounded-[4px] bg-linear-to-b from-[#c46a6a] via-[#8f1414] via-30% to-[#6e0606] pl-[6px] text-[17px] font-bold italic">
      <svg width="19" height="17" viewBox="0 0 19 17">
        <path d="M3 2c3-2 5-1 7 0L8.500 8c-2-1-4-1-7 0z" fill="#f0582a" />
        <path d="M11 2.500c3 1 5 1 8-.5l-1.500 6c-3 1.500-5 1.500-8 .5z" fill="#8ac53e" />
        <path d="M1.200 9c3-1.500 5-1 7 0l-1.500 6c-2-1-4-1-7 0z" fill="#4a90e2" />
        <path d="M9.200 9.500c3 1 5 1 8-.5l-1.500 6c-3 1.500-5 1.500-8 .5z" fill="#fbc62f" />
      </svg>
      пуск
    </button>
    <div className="ml-[9px] flex w-[112px] items-center">
      <Grip />
      <button aria-label="Internet Explorer" className="ml-[8px]">
        <svg width="16" height="16" viewBox="0 0 16 16" fill="none">
          <path d="M12 11.500A5 5 0 1 1 13 8.500H4" stroke="#3fa3ec" strokeWidth="3" />
          <path d="M1 15C-1 11 9 1 14.500 1.500c1 .5.500 2-.5 3.500" stroke="#f2c431" strokeWidth="1.500" />
        </svg>
      </button>
      <button aria-label="Обозреватель" className="ml-[7px]">
        <svg width="16" height="16" viewBox="0 0 16 16">
          <circle cx="8" cy="8" r="6.800" fill="#b01616" stroke="#f1dcd8" strokeWidth="1.600" />
          <path d="M3 7c0-5 10-5 10 0 0 3-3 5-5 5S3 10 3 7z" fill="#e05a30" />
          <path d="M4.500 6c0-3.500 7-3.500 7 0-1 3-6 3-7 0z" fill="#fbe3d0" />
        </svg>
      </button>
      <button aria-label="Рабочий стол" className="ml-[8px]">
        <svg width="14" height="15" viewBox="0 0 14 15">
          <path d="M0 0h11l3 3v12H0z" fill="#f3f3ee" />
          <path d="M2 4h9v7H2z" fill="#fff" stroke="#333" />
          <path d="M2 4h9v2H2z" fill="#2b3fa8" />
          <path d="M4 8h2v2H4zM8 8h2v2H8z" fill="#d03030" />
        </svg>
      </button>
      <button aria-label="Ещё" className="mb-[8px] ml-[16px]">
        <svg width="5" height="8" viewBox="0 0 5 8"><path d="M0 0v8l5-4z" fill="#e02020" /></svg>
      </button>
      <span className="ml-auto flex">
        <Grip />
      </span>
    </div>
    <button className="ml-[4px] flex h-[25px] w-[157px] items-center gap-[4px] rounded-[2px] border border-[#6a6a6a] border-b-transparent bg-black/60 pl-[8px]">
      <svg width="15" height="15" viewBox="0 0 15 15">
        <path d="M4 .5h10.500v14H4z" fill="#e8f0fc" stroke="#7fa0d8" />
        <path d="M10 4h3M10 7h3M6 12h7" stroke="#7fa0d8" />
        <path d="M0 2h9v9H0z" fill="#3465b8" />
        <path d="M1.500 4l1.500 5 1.500-4L6 9l1.500-5" fill="none" stroke="#fff" />
      </svg>
      <span className="truncate whitespace-pre">Настройка    ОС [Ре...</span>
    </button>
    <button className="ml-[3px] flex h-[26px] w-[158px] items-center gap-[3px] rounded-[3px] border border-[#8a7474] bg-linear-to-b from-[#180404] to-[#330606] pl-[9px]">
      <svg width="16" height="16" viewBox="0 0 16 16">
        <path d="M.5.500h11v12H.5z" fill="#e6f3e2" stroke="#4d9c48" />
        <path d="M3.500 2.500h12v13h-12z" fill="#fff" stroke="#4d9c48" />
        <path d="M5 5l7 8M12 5l-7 8" stroke="#217a25" strokeWidth="2" />
      </svg>
      Microsoft Excel
    </button>
    <div className="ml-auto flex items-center">
      <Grip />
      <button className="ml-[8px] h-[16px] w-[13px] bg-[#a81c1c] leading-[16px]">RL</button>
      <div className="ml-[7px] flex h-[24px] w-[142px] items-center gap-[3px] rounded-[6px] bg-linear-to-b from-[#b86a6a] via-[#7d1212] via-30% to-[#5e0404] pl-[18px] text-[13px]">
        <svg width="16" height="16" viewBox="0 0 16 16">
          <path d="M5 1h8v6H5z" fill="#24306e" stroke="#9fb0e0" />
          <path d="M1 5h8v6H1z" fill="#24306e" stroke="#9fb0e0" />
          <path d="M7 7l7 7M14 7l-7 7" stroke="#f03434" strokeWidth="2.200" />
        </svg>
        <svg width="14" height="16" viewBox="0 0 14 16">
          <path d="M7 3l6-1 1 3-6 10-5-1z" fill="#e8e8ea" />
          <circle cx="4" cy="4" r="3.800" fill="#e02a2a" />
          <path d="M2.500 2.500l3 3M5.500 2.500l-3 3" stroke="#fff" />
        </svg>
        <time className="ml-auto whitespace-nowrap pr-[9px]">20:35 Пн 10</time>
      </div>
    </div>
  </div>
);

export default function App() {
  return (
    <div className="flex min-h-screen flex-col overflow-hidden bg-[#bfdbff] font-['Open_Sans','Noto_Sans',sans-serif]">
      <TitleBar />
      <TabBar />
      <Ribbon />
      <FormulaBar />
      <Workbook />
      <StatusBar />
      <Taskbar />
    </div>
  );
}
